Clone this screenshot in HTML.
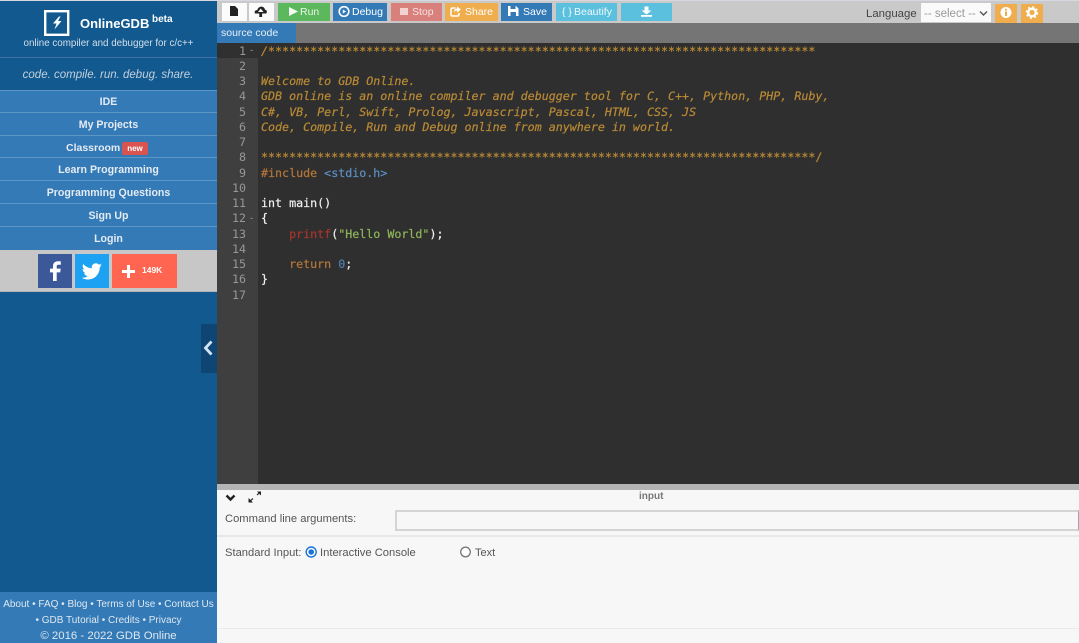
<!DOCTYPE html>
<html>
<head>
<meta charset="utf-8">
<style>
html,body{margin:0;padding:0;width:1079px;height:643px;overflow:hidden;background:#f7f7f7;font-family:"Liberation Sans",sans-serif}
.a{position:absolute}
#side{left:0;top:0;width:217px;height:643px;background:#11598f}
.nav{position:absolute;left:0;width:217px;height:22px;background:#337ab7;border-top:1px solid #5d95c5;color:#e4ebf3;font-size:10.6px;font-weight:bold;text-align:center;line-height:23px;white-space:nowrap}
.btn{position:absolute;top:3px;height:18px;color:#fff;font-size:10.5px;line-height:18px;white-space:nowrap}
.btn span{position:absolute;top:0}
.ln{position:absolute;left:218px;width:28px;text-align:right;color:#979797;font:11.67px/15.25px "DejaVu Sans Mono",monospace}
.cd{position:absolute;left:261px;font:11.67px/15.25px "DejaVu Sans Mono",monospace;white-space:pre;color:#f0f0f0;-webkit-text-stroke:.2px}
.c{color:#b98a36;font-style:italic}
.fold{position:absolute;left:249px;color:#999;font:9px/15px "Liberation Mono",monospace}
.lab{position:absolute;color:#555;font-size:11.2px;line-height:14px;white-space:nowrap}
.ft{position:absolute;left:0;width:217px;text-align:center;color:#dfe8f0;white-space:nowrap}
</style>
</head>
<body>
<!-- sidebar -->
<div class="a" id="side"></div>
<div class="a" style="left:0;top:0;width:1079px;height:1px;background:#d8d8e0"></div>
<svg class="a" style="left:43px;top:9px" width="28" height="28" viewBox="0 0 28 28"><rect x="2.2" y="2.2" width="23" height="23.6" fill="none" stroke="#fff" stroke-width="2.4"/><path d="M16 7.5 L10 14.5 H13.5 L11.5 20.5 L18.5 12 H15 L17.5 7.5Z" fill="#fff"/></svg>
<div class="a" style="left:80px;top:15px;color:#fff;font-size:13px;font-weight:bold;line-height:17px;white-space:nowrap">OnlineGDB</div>
<div class="a" style="left:152px;top:13px;color:#fff;font-size:10px;font-weight:bold;line-height:13px">beta</div>
<div class="a" style="left:0;top:38px;width:217px;text-align:center;color:#d5dfe9;font-size:9.8px;line-height:12px;white-space:nowrap">online compiler and debugger for c/c++</div>
<div class="a" style="left:0;top:57px;width:217px;height:1px;background:#3f6fa3"></div>
<div class="a" style="left:0;top:68px;width:216px;text-align:center;color:#c3d0dd;font-size:11.5px;font-style:italic;line-height:15px;white-space:nowrap">code. compile. run. debug. share.</div>
<div class="nav" style="top:90px">IDE</div>
<div class="nav" style="top:112px;height:23px;line-height:25px">My Projects</div>
<div class="nav" style="top:135px;height:22px"></div>
<div class="a" style="left:66px;top:141px;color:#e4ebf3;font-size:10.5px;font-weight:bold;line-height:14px">Classroom</div>
<div class="a" style="left:122px;top:142px;width:26px;height:13px;background:#d9534f;border-radius:2px;color:#fff;font-size:8px;font-weight:bold;text-align:center;line-height:13px">new</div>
<div class="nav" style="top:157px;height:23px;line-height:24px">Learn Programming</div>
<div class="nav" style="top:180px;height:22px;line-height:25px">Programming Questions</div>
<div class="nav" style="top:203px;height:22px;line-height:24px">Sign Up</div>
<div class="nav" style="top:226px;height:23px;line-height:25px">Login</div>
<div class="a" style="left:0;top:250px;width:217px;height:42px;background:#c7c7c7"></div>
<div class="a" style="left:0;top:291px;width:217px;height:1px;background:#aeb4b8"></div>
<div class="a" style="left:38px;top:254px;width:34px;height:34px;background:#3b5998"></div>
<svg class="a" style="left:38px;top:254px" width="34" height="34" viewBox="0 0 34 34"><path d="M18.7 27V18.4H22.2L22.7 14.6H18.7V12.4C18.7 11.3 19.1 10.7 20.5 10.7H22.8V7.4C22.2 7.3 21.1 7.2 19.9 7.2 17 7.2 15 9 15 12V14.6H12V18.4H15V27Z" fill="#fff"/></svg>
<div class="a" style="left:75px;top:254px;width:34px;height:34px;background:#1da1f2"></div>
<svg class="a" style="left:75px;top:254px" width="34" height="34" viewBox="0 0 34 34"><path d="M27 11.2c-.8.4-1.6.6-2.4.7.9-.5 1.5-1.3 1.8-2.3-.8.5-1.7.8-2.6 1-.8-.8-1.9-1.3-3-1.3-2.3 0-4.1 1.9-4.1 4.1 0 .3 0 .6.1.9-3.4-.2-6.5-1.8-8.5-4.3-.4.6-.6 1.3-.6 2.1 0 1.4.7 2.7 1.8 3.4-.7 0-1.3-.2-1.9-.5v.1c0 2 1.4 3.7 3.3 4-.3.1-.7.1-1.1.1-.3 0-.5 0-.8-.1.5 1.6 2 2.8 3.8 2.9-1.4 1.1-3.2 1.8-5.1 1.8-.3 0-.7 0-1-.1 1.8 1.2 4 1.8 6.3 1.8 7.5 0 11.7-6.2 11.7-11.7v-.5c.8-.6 1.5-1.3 2.1-2.1z" fill="#fff"/></svg>
<div class="a" style="left:112px;top:254px;width:65px;height:34px;background:#ff6550"></div>
<div class="a" style="left:122px;top:270px;width:13px;height:3px;background:#fff"></div>
<div class="a" style="left:127px;top:265px;width:3px;height:13px;background:#fff"></div>
<div class="a" style="left:142px;top:264px;color:#fff;font-size:8.5px;font-weight:bold;line-height:12px">149K</div>
<div class="a" style="left:201px;top:324px;width:16px;height:49px;background:#0f4572"></div>
<svg class="a" style="left:201px;top:338px" width="16" height="20" viewBox="0 0 16 20"><path d="M10.5 3.5 L4.5 10 L10.5 16.5" fill="none" stroke="#cfe6f7" stroke-width="2.8"/></svg>
<div class="a" style="left:0;top:592px;width:217px;height:51px;background:#337ab7"></div>
<div class="ft" style="top:598px;font-size:10px;line-height:13px">About • FAQ • Blog • Terms of Use • Contact Us</div>
<div class="ft" style="top:614px;font-size:10px;line-height:13px">• GDB Tutorial • Credits • Privacy</div>
<div class="ft" style="top:629px;font-size:11.4px;line-height:14px">© 2016 - 2022 GDB Online</div>

<!-- toolbar -->
<div class="a" style="left:217px;top:1px;width:862px;height:22px;background:#c9c9c9"></div>
<div class="a" style="left:222px;top:3px;width:25px;height:18px;background:#fbfbfb"></div>
<svg class="a" style="left:222px;top:3px" width="25" height="18" viewBox="0 0 25 18"><path d="M8 3H13L16 6V13H8Z" fill="#222"/></svg>
<div class="a" style="left:249px;top:3px;width:25px;height:18px;background:#fbfbfb"></div>
<svg class="a" style="left:249px;top:3px" width="25" height="18" viewBox="0 0 25 18"><path d="M6 10.5C5 8.500 6.500 6.800 8.300 7.200 9.300 2.500 15.300 2.500 16 6.800 17.800 6.800 18.500 9 17.300 10.500Z" fill="#222"/><path d="M11.700 5.500L14.500 9H9Z" fill="#fbfbfb"/><rect x="10.300" y="9" width="2.800" height="5" fill="#222"/></svg>

<div class="btn" style="left:278px;width:52px;background:#5cb85c"><span style="left:22px;color:#e8f5e8">Run</span></div>
<svg class="a" style="left:278px;top:0" width="22" height="22"><path d="M11 7V16L20 11.5Z" fill="#f2faf2"/></svg>
<div class="btn" style="left:333px;width:54px;background:#337ab7"><span style="left:19px">Debug</span></div>
<svg class="a" style="left:333px;top:0" width="18" height="22"><circle cx="11" cy="11.5" r="4.8" fill="none" stroke="#fff" stroke-width="1.6"/><path d="M9.800 9.500L13 11.5 9.800 13.500Z" fill="#fff"/></svg>
<div class="btn" style="left:391px;width:51px;background:#d9807d"><span style="left:21px;color:#f6e2e1">Stop</span></div>
<div class="a" style="left:400px;top:8px;width:8px;height:7px;background:#f2d2d0"></div>
<div class="btn" style="left:445px;width:53px;background:#f0ad4e"><span style="left:20px">Share</span></div>
<svg class="a" style="left:445px;top:0" width="18" height="22"><path d="M10.500 8H7.500C6.500 8 6 8.500 6 9.500V14.500C6 15.500 6.500 16 7.500 16H12.500C13.500 16 14 15.500 14 14.500V13" fill="none" stroke="#fff" stroke-width="1.5"/><path d="M12 6.500L16 9.500 12 12.500V10.500C10.500 10.500 9.500 11 9 12.500 9 10 10 8.500 12 8.500Z" fill="#fff"/></svg>
<div class="btn" style="left:501px;width:51px;background:#337ab7"><span style="left:22px">Save</span></div>
<svg class="a" style="left:501px;top:0" width="20" height="22"><path d="M7 6H15L17.500 8.500V16H7Z" fill="#fff"/><rect x="9.500" y="6" width="5" height="3" fill="#337ab7"/><rect x="9.500" y="12" width="5.500" height="4" fill="#337ab7"/></svg>
<div class="btn" style="left:556px;width:61px;background:#5bc0de"><span style="left:6px;color:#f0fafd">{ }</span><span style="left:18px;color:#eef9fc">Beautify</span></div>
<div class="btn" style="left:621px;width:51px;background:#5bc0de"></div>
<svg class="a" style="left:621px;top:0" width="51" height="22"><path d="M23.500 6.500h4v4h3l-5 4-5-4h3z" fill="#fff"/><rect x="20" y="15" width="11" height="1.8" fill="#fff"/></svg>

<div class="a" style="left:866px;top:6.5px;color:#444;font-size:11.4px;line-height:15px">Language</div>
<div class="a" style="left:921px;top:3px;width:70px;height:19px;background:#fafafa"></div>
<div class="a" style="left:924px;top:7px;color:#9a9a9a;font-size:11.5px;line-height:15px;white-space:nowrap">-- select --</div>
<svg class="a" style="left:979px;top:10px" width="10" height="8"><path d="M1 1.500L4.500 5 8 1.500" fill="none" stroke="#555" stroke-width="1.4"/></svg>
<div class="a" style="left:995px;top:4px;width:22px;height:19px;background:#f0ad4e"></div>
<svg class="a" style="left:995px;top:4px" width="22" height="19"><circle cx="11" cy="8.5" r="5.5" fill="#fff"/><rect x="10" y="7.5" width="2" height="4.5" fill="#f0ad4e"/><rect x="10" y="4.8" width="2" height="1.8" fill="#f0ad4e"/></svg>
<div class="a" style="left:1021px;top:4px;width:22px;height:19px;background:#f0ad4e"></div>
<svg class="a" style="left:1021px;top:4px" width="22" height="19"><circle cx="11" cy="8.5" r="3.8" fill="none" stroke="#fff" stroke-width="2.4"/><circle cx="11" cy="8.5" r="5.4" fill="none" stroke="#fff" stroke-width="1.8" stroke-dasharray="2 2.24"/></svg>

<!-- tab bar -->
<div class="a" style="left:217px;top:23px;width:862px;height:20px;background:#757575"></div>
<div class="a" style="left:217px;top:23px;width:79px;height:20px;background:#337ab7;color:#e8f0f7;font-size:10.5px;line-height:21px;text-indent:4px;white-space:nowrap">source code</div>

<!-- editor -->
<div class="a" style="left:217px;top:43px;width:862px;height:441px;background:#2f2f2f"></div>
<div class="a" style="left:217px;top:43px;width:41px;height:441px;background:#3f3f3f"></div>
<div class="a" style="left:217px;top:43px;width:41px;height:15px;background:#303030"></div>
<div class="ln" style="top:43.5px">1<br>2<br>3<br>4<br>5<br>6<br>7<br>8<br>9<br>10<br>11<br>12<br>13<br>14<br>15<br>16<br>17</div>
<div class="fold" style="top:44px">-</div>
<div class="fold" style="top:212px">-</div>

<div class="cd c" style="top:43.5px">/******************************************************************************</div>
<div class="cd c" style="top:74px">Welcome to GDB Online.
GDB online is an online compiler and debugger tool for C, C++, Python, PHP, Ruby,
C#, VB, Perl, Swift, Prolog, Javascript, Pascal, HTML, CSS, JS
Code, Compile, Run and Debug online from anywhere in world.</div>
<div class="cd c" style="top:150.25px;font-style:normal">*******************************************************************************/</div>
<div class="cd" style="top:165.5px"><span style="color:#b5763a">#include </span><span style="color:#5b8fc4">&lt;stdio.h&gt;</span></div>
<div class="cd" style="top:196px">int main()
{
    <span style="color:#a8352c">printf</span>(<span style="color:#8fb45a">"Hello World"</span>);

    <span style="color:#b5763a">return</span> <span style="color:#4f7fb0">0</span>;
}</div>

<!-- input pane -->
<div class="a" style="left:217px;top:484px;width:862px;height:6px;background:#b4b4b4"></div>
<div class="a" style="left:217px;top:490px;width:862px;height:153px;background:#f7f7f7"></div>
<div class="a" style="left:639px;top:491px;color:#777;font-size:10px;font-weight:bold;line-height:12px">input</div>
<svg class="a" style="left:225px;top:494px" width="12" height="8"><path d="M1.500 1.500L5.500 5.500 9.500 1.500" fill="none" stroke="#222" stroke-width="2.4"/></svg>
<svg class="a" style="left:247px;top:490px" width="16" height="14"><path d="M2.500 11.500L6 8.500M10 5L13.500 2" stroke="#333" stroke-width="1.2"/><path d="M10 1.500H14V5.500Z" fill="#222"/><path d="M1.500 8V12.500H6Z" fill="#222"/></svg>
<div class="lab" style="left:225px;top:512px">Command line arguments:</div>
<div class="a" style="left:395px;top:510px;width:684px;height:21px;box-sizing:border-box;border:2px solid #d4d4d4;border-right:1px solid #a99bb5;background:#f7f7f7"></div>
<div class="a" style="left:217px;top:535px;width:862px;height:2px;background:#e8e8ec"></div>
<div class="lab" style="left:225px;top:546px">Standard Input:</div>
<svg class="a" style="left:305px;top:546px" width="13" height="13"><circle cx="6.2" cy="6" r="5" fill="#fff" stroke="#1a73d8" stroke-width="1.4"/><circle cx="6.2" cy="6" r="2.8" fill="#1a73d8"/></svg>
<div class="lab" style="left:320px;top:546px">Interactive Console</div>
<svg class="a" style="left:459px;top:546px" width="13" height="13"><circle cx="6.5" cy="6" r="4.8" fill="#fff" stroke="#777" stroke-width="1.3"/></svg>
<div class="lab" style="left:475px;top:546px;font-size:11px">Text</div>
<div class="a" style="left:217px;top:628px;width:862px;height:1px;background:#ebe8f0"></div>
</body>
</html>
